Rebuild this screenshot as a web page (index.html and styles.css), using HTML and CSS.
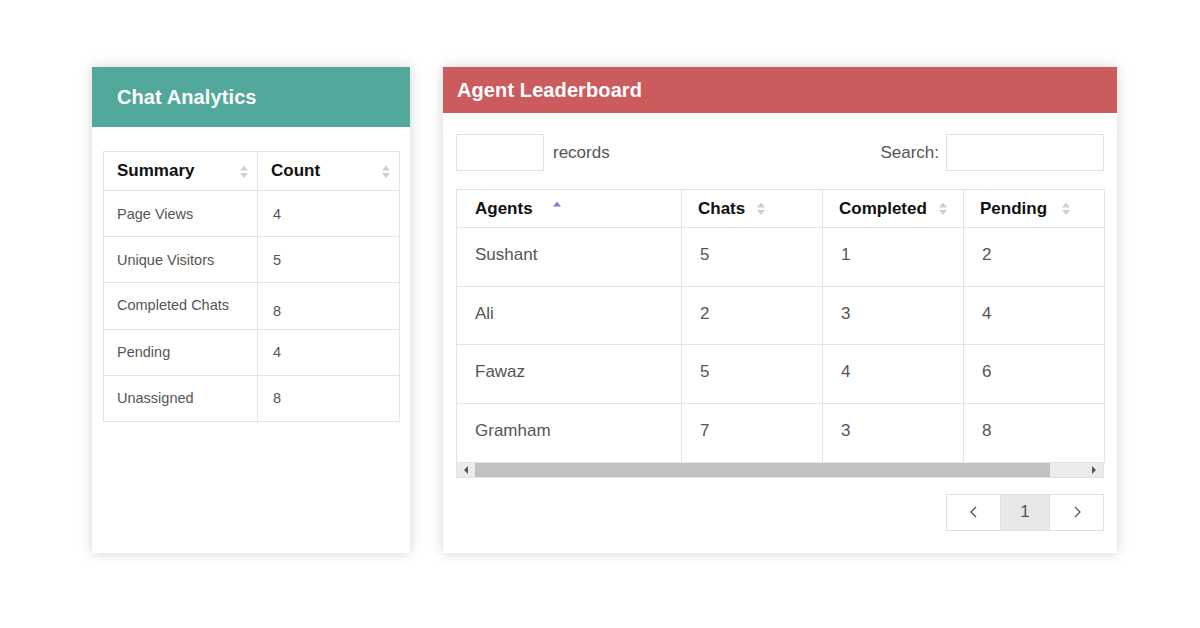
FILE: index.html
```html
<!DOCTYPE html>
<html>
<head>
<meta charset="utf-8">
<link rel="stylesheet" href="styles.css">
</head>
<body>
<div class="page">
  <section class="card card-left">
    <header class="card-head teal"><h2>Chat Analytics</h2></header>
    <div class="left-body">
      <table class="summary">
        <thead>
          <tr>
            <th class="c1"><span>Summary</span><svg class="sort sort-right" width="8" height="14" viewBox="0 0 8 14"><polygon points="0,5.5 4,0.5 8,5.5" fill="#cfcfcf"/><polygon points="0,8 8,8 4,13" fill="#cfcfcf"/></svg></th>
            <th class="c2"><span>Count</span><svg class="sort sort-right" width="8" height="14" viewBox="0 0 8 14"><polygon points="0,5.5 4,0.5 8,5.5" fill="#cfcfcf"/><polygon points="0,8 8,8 4,13" fill="#cfcfcf"/></svg></th>
          </tr>
        </thead>
        <tbody>
          <tr><td>Page Views</td><td class="num">4</td></tr>
          <tr><td>Unique Visitors</td><td class="num">5</td></tr>
          <tr><td class="up">Completed Chats</td><td class="num down">8</td></tr>
          <tr><td>Pending</td><td class="num">4</td></tr>
          <tr><td>Unassigned</td><td class="num">8</td></tr>
        </tbody>
      </table>
    </div>
  </section>

  <section class="card card-right">
    <header class="card-head red"><h2>Agent Leaderboard</h2></header>
    <div class="right-body">
      <div class="controls">
        <div class="len"><span class="box box-small"></span><span class="lbl">records</span></div>
        <div class="search"><span class="lbl">Search:</span><span class="box box-wide"></span></div>
      </div>
      <div class="table-wrap">
        <table class="board">
          <thead>
            <tr>
              <th class="w1">Agents<svg class="sort s-agents" width="8" height="14" viewBox="0 0 8 14"><polygon points="0,5.5 4,0.5 8,5.5" fill="#7b80d8"/></svg></th>
              <th class="w2">Chats<svg class="sort s-gap" width="8" height="14" viewBox="0 0 8 14"><polygon points="0,5.5 4,0.5 8,5.5" fill="#cfcfcf"/><polygon points="0,8 8,8 4,13" fill="#cfcfcf"/></svg></th>
              <th class="w2">Completed<svg class="sort s-gap" width="8" height="14" viewBox="0 0 8 14"><polygon points="0,5.5 4,0.5 8,5.5" fill="#cfcfcf"/><polygon points="0,8 8,8 4,13" fill="#cfcfcf"/></svg></th>
              <th class="w2">Pending<svg class="sort s-gap2" width="8" height="14" viewBox="0 0 8 14"><polygon points="0,5.5 4,0.5 8,5.5" fill="#cfcfcf"/><polygon points="0,8 8,8 4,13" fill="#cfcfcf"/></svg></th>
            </tr>
          </thead>
          <tbody>
            <tr><td>Sushant</td><td class="v">5</td><td class="v">1</td><td class="v">2</td></tr>
            <tr><td>Ali</td><td class="v">2</td><td class="v">3</td><td class="v">4</td></tr>
            <tr><td>Fawaz</td><td class="v">5</td><td class="v">4</td><td class="v">6</td></tr>
            <tr><td>Gramham</td><td class="v">7</td><td class="v">3</td><td class="v">8</td></tr>
          </tbody>
        </table>
        <div class="hscroll">
          <span class="arrow"><svg width="6" height="8" viewBox="0 0 6 8"><polygon points="5,0 5,8 1,4" fill="#555"/></svg></span>
          <span class="thumb"></span>
          <span class="rest"></span>
          <span class="arrow"><svg width="6" height="8" viewBox="0 0 6 8"><polygon points="1,0 1,8 5,4" fill="#555"/></svg></span>
        </div>
      </div>
      <div class="pager">
        <span class="pg pg-side"><svg width="10" height="14" viewBox="0 0 10 14"><polyline points="7,2 2,7 7,12" fill="none" stroke="#555" stroke-width="1.3"/></svg></span>
        <span class="pg pg-cur">1</span>
        <span class="pg pg-side"><svg width="10" height="14" viewBox="0 0 10 14"><polyline points="3,2 8,7 3,12" fill="none" stroke="#555" stroke-width="1.3"/></svg></span>
      </div>
    </div>
  </section>
</div>
</body>
</html>
```

FILE: styles.css
```css
* { box-sizing: border-box; }
html, body { margin: 0; padding: 0; background: #fff; }
body {
  width: 1200px;
  height: 628px;
  overflow: hidden;
  font-family: "Liberation Sans", Arial, Helvetica, sans-serif;
}
.page {
  display: flex;
  align-items: flex-start;
  gap: 33px;
  padding: 67px 0 0 92px;
}
.card {
  background: #fff;
  height: 486px;
  box-shadow: 0 0 12px rgba(0, 0, 0, 0.18);
  display: flex;
  flex-direction: column;
}
.card-left { width: 318px; }
.card-right { width: 674px; }
.card-head {
  display: flex;
  align-items: center;
  color: #fff;
}
.card-head h2 {
  margin: 0;
  font-size: 20px;
  font-weight: bold;
  letter-spacing: 0.1px;
}
.teal { background: #51a89b; height: 60px; padding: 0 0 0 25px; }
.red { background: #cb5b5d; height: 46px; padding: 0 0 0 14px; }

/* left table */
.left-body { padding: 24px 10px 0 11px; }
.summary {
  width: 297px;
  border-collapse: collapse;
  table-layout: fixed;
}
.summary th, .summary td {
  border: 1px solid #e3e3e3;
  text-align: left;
}
.summary th {
  height: 39px;
  font-size: 17px;
  font-weight: bold;
  color: #111;
  padding: 0 0 0 13px;
  position: relative;
}
.summary .c1 { width: 154px; }
.summary td {
  height: 46.2px;
  font-size: 14.5px;
  color: #555;
  padding: 0 0 0 13px;
}
.summary td.num { padding-left: 15px; }
.summary td.up { padding-bottom: 2px; }
.summary td.down { padding-top: 10px; }
.sort { display: inline-block; vertical-align: middle; }
.sort-right {
  position: absolute;
  right: 9px;
  top: 13px;
}

/* right */
.right-body { padding: 21px 13px 0 13px; }
.controls {
  display: flex;
  justify-content: space-between;
  align-items: center;
  height: 37px;
}
.len, .search { display: flex; align-items: center; }
.box {
  display: block;
  height: 37px;
  border: 1px solid #e2e2e2;
}
.box-small { width: 88px; }
.box-wide { width: 158px; }
.lbl { font-size: 17px; color: #555; }
.len .lbl { margin-left: 9px; }
.search .lbl { margin-right: 7px; }

.table-wrap { margin-top: 18px; width: 648px; }
.board {
  width: 648px;
  border-collapse: collapse;
  table-layout: fixed;
}
.board th, .board td {
  border: 1px solid #e3e3e3;
  text-align: left;
}
.board th {
  height: 38px;
  font-size: 17px;
  font-weight: bold;
  color: #111;
  padding: 1px 0 0 16px;
}
.board th:first-child { padding-left: 18px; }
.board .w1 { width: 225px; }
.board .w2 { width: 141px; }
.board td {
  height: 58.7px;
  font-size: 17px;
  color: #555;
  padding: 0 0 4px 18px;
}
.board td.v { padding-left: 18px; }
.s-agents { margin-left: 20px; margin-top: -4px; }
.s-gap { margin-left: 12px; margin-top: -1px; }
.s-gap2 { margin-left: 15px; margin-top: -1px; }

.hscroll {
  display: flex;
  height: 15px;
  background: #ececec;
  border: 1px solid #e3e3e3;
  border-top: none;
}
.hscroll .arrow {
  width: 18px;
  display: flex;
  align-items: center;
  justify-content: center;
}
.hscroll .thumb { width: 575px; background: #c1c1c1; }
.hscroll .rest { flex: 1; }

.pager {
  display: flex;
  justify-content: flex-end;
  margin-top: 16px;
}
.pg {
  height: 37px;
  border: 1px solid #e0e0e0;
  display: flex;
  align-items: center;
  justify-content: center;
  font-size: 17px;
  color: #555;
}
.pg-side { width: 55px; }
.pg-cur { width: 48px; background: #e8e8e8; border-left: none; border-right: none; }
```
